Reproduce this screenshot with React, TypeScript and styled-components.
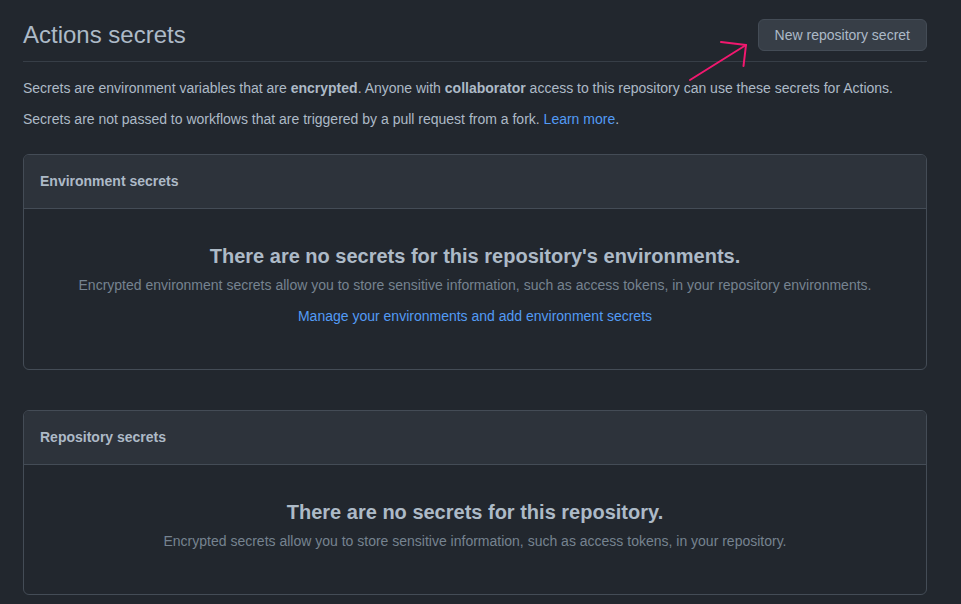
import React from "react";
import styled, { createGlobalStyle } from "styled-components";

const GlobalStyle = createGlobalStyle`
  html, body {
    margin: 0;
    padding: 0;
    background: #22272e;
  }
  body {
    font-family: "Liberation Sans", Arial, sans-serif;
    color: #adbac7;
    font-size: 14px;
    line-height: 1.5;
  }
`;

const Page = styled.main`
  width: 904px;
  padding: 17px 34px 0 23px;
`;

const Subhead = styled.div`
  position: relative;
  display: flex;
  align-items: center;
  justify-content: space-between;
  padding-bottom: 8px;
  border-bottom: 1px solid #373e47;
  margin-bottom: 16px;
`;

const Heading = styled.h2`
  margin: 0;
  font-size: 24px;
  font-weight: 400;
  line-height: 36px;
  color: #adbac7;
`;

const Button = styled.button`
  height: 32px;
  padding: 0 16px;
  font-family: inherit;
  font-size: 14px;
  line-height: 20px;
  color: #adbac7;
  background: #373e47;
  border: 1px solid #444c56;
  border-radius: 6px;
  cursor: pointer;
`;

const Arrow = styled.svg`
  position: absolute;
  left: 637px;
  top: 3px;
  overflow: visible;
  pointer-events: none;
`;

const Para = styled.p<{ $mb?: number }>`
  margin: 0 0 ${(p) => p.$mb ?? 10}px;
  font-size: 14px;
  line-height: 21px;
`;

const Link = styled.a`
  color: #539bf5;
  text-decoration: none;
`;

const Box = styled.section<{ $mt?: number }>`
  margin-top: ${(p) => p.$mt ?? 0}px;
  border: 1px solid #444c56;
  border-radius: 6px;
  overflow: hidden;
`;

const BoxHeader = styled.div`
  padding: 16px;
  background: #2d333b;
  border-bottom: 1px solid #444c56;
  font-weight: 700;
  font-size: 14px;
  line-height: 21px;
`;

const Blank = styled.div`
  padding: 32px 32px 32px;
  text-align: center;
`;

const BlankTitle = styled.h3`
  margin: 0;
  font-size: 20px;
  line-height: 30px;
  font-weight: 700;
  color: #adbac7;
`;

const BlankText = styled.p<{ $mt: number }>`
  margin: ${(p) => p.$mt}px 0 10px;
  font-size: 14px;
  line-height: 21px;
  color: #768390;
`;

export default function App() {
  return (
    <>
      <GlobalStyle />
      <Page>
        <Subhead>
          <Heading>Actions secrets</Heading>
          <Button>New repository secret</Button>
          <Arrow width="100" height="70" viewBox="0 0 100 70">
            <g
              stroke="#f2186f"
              strokeWidth="2"
              fill="none"
              strokeLinecap="round"
              strokeLinejoin="round"
            >
              <path d="M30 60 L86 25" />
              <path d="M61 22 L86 25 L83.5 46" />
            </g>
          </Arrow>
        </Subhead>
        <Para>
          Secrets are environment variables that are <strong>encrypted</strong>. Anyone with{" "}
          <strong>collaborator</strong> access to this repository can use these secrets for Actions.
        </Para>
        <Para $mb={24}>
          Secrets are not passed to workflows that are triggered by a pull request from a fork.{" "}
          <Link href="#">Learn more</Link>.
        </Para>

        <Box>
          <BoxHeader>Environment secrets</BoxHeader>
          <Blank>
            <BlankTitle>There are no secrets for this repository's environments.</BlankTitle>
            <BlankText $mt={4}>
              Encrypted environment secrets allow you to store sensitive information, such as access
              tokens, in your repository environments.
            </BlankText>
            <BlankText $mt={10}>
              <Link href="#">Manage your environments and add environment secrets</Link>
            </BlankText>
          </Blank>
        </Box>

        <Box $mt={40}>
          <BoxHeader>Repository secrets</BoxHeader>
          <Blank>
            <BlankTitle>There are no secrets for this repository.</BlankTitle>
            <BlankText $mt={4}>
              Encrypted secrets allow you to store sensitive information, such as access tokens, in
              your repository.
            </BlankText>
          </Blank>
        </Box>
      </Page>
    </>
  );
}
